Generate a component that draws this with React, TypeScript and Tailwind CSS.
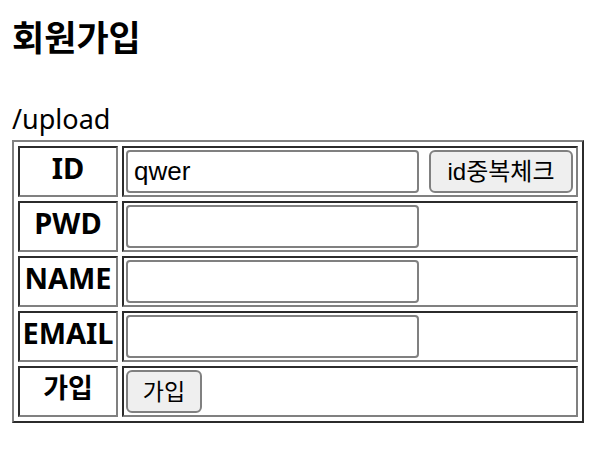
const sans = { fontFamily: '"Noto Sans", "Noto Sans CJK KR", sans-serif' };
const arial = { fontFamily: '"Liberation Sans", "Noto Sans CJK KR", sans-serif' };

const cell =
  'border-2 border-t-[#2b2b2b] border-l-[#2b2b2b] border-r-[#808080] border-b-[#808080] p-0.5 h-[51px]';
const head = `${cell} pt-0 pb-2 leading-[36px] font-bold`;

function Field({ value = '' }: { value?: string }) {
  return (
    <input
      type="text"
      defaultValue={value}
      style={arial}
      className="h-[43px] w-[293px] rounded-[4px] border-2 border-[#808080] bg-white px-[6px] text-[26px] text-black outline-none"
    />
  );
}

export default function App() {
  const rows = ['PWD', 'NAME', 'EMAIL'];

  return (
    <div className="min-h-screen bg-white px-3 pt-[18px] text-black" style={sans}>
      <h2 className="text-[35px] font-bold leading-[40px]">회원가입</h2>

      <p className="mt-[44px] text-[27px] leading-[34px]">/upload</p>

      <form className="mt-[4px]">
        <table className="w-[572px] border-separate border-spacing-1 border-2 border-t-[#808080] border-l-[#808080] border-r-[#2b2b2b] border-b-[#2b2b2b]">
          <tbody>
            <tr>
              <th className={`${head} w-[100px] text-[29px]`}>ID</th>
              <td className={cell}>
                <div className="flex items-center gap-[10px]">
                  <Field value="qwer" />
                  <button
                    type="button"
                    style={arial}
                    className="h-[43px] w-[144px] rounded-[6px] border-2 border-[#808080] bg-[#efefef] text-[24px] text-black"
                  >
                    id중복체크
                  </button>
                </div>
              </td>
            </tr>

            {rows.map((label) => (
              <tr key={label}>
                <th className={`${head} text-[29px]`}>{label}</th>
                <td className={cell}>
                  <Field />
                </td>
              </tr>
            ))}

            <tr>
              <th className={`${head} text-[27px]`}>가입</th>
              <td className={cell}>
                <button
                  type="submit"
                  style={sans}
                  className="h-[43px] w-[76px] rounded-[6px] border-2 border-[#808080] bg-[#efefef] text-[23px] text-black"
                >
                  가입
                </button>
              </td>
            </tr>
          </tbody>
        </table>
      </form>
    </div>
  );
}
